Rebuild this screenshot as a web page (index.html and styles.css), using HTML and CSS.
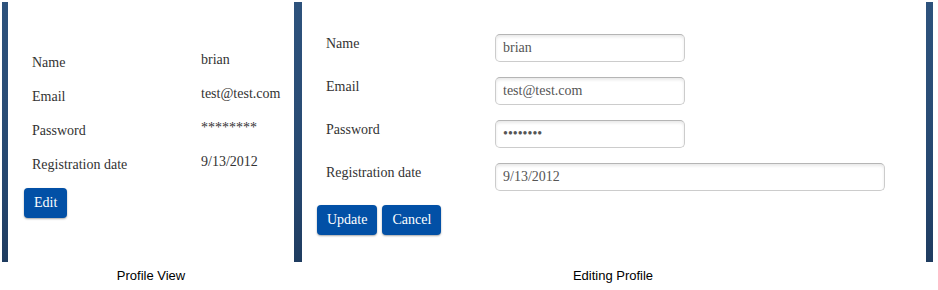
FILE: index.html
```html
<!DOCTYPE html>
<html>
<head>
<meta charset="utf-8">
<link rel="stylesheet" href="styles.css">
</head>
<body>
<div class="shots">
  <figure class="shot shot-view">
    <div class="panel panel-view">
      <div class="grid view-grid">
        <div class="label">Name</div><div class="value">brian</div>
        <div class="label">Email</div><div class="value">test@test.com</div>
        <div class="label">Password</div><div class="value">********</div>
        <div class="label">Registration date</div><div class="value">9/13/2012</div>
      </div>
      <div class="actions view-actions">
        <button class="btn">Edit</button>
      </div>
    </div>
    <figcaption class="caption">Profile View</figcaption>
  </figure>
  <figure class="shot shot-edit">
    <div class="panel panel-edit">
      <div class="grid edit-grid">
        <div class="label">Name</div><div><input class="field" type="text" value="brian"></div>
        <div class="label">Email</div><div><input class="field" type="text" value="test@test.com"></div>
        <div class="label">Password</div><div><input class="field" type="password" value="********"></div>
        <div class="label">Registration date</div><div><input class="field field-wide" type="text" value="9/13/2012"></div>
      </div>
      <div class="actions edit-actions">
        <button class="btn">Update</button>
        <button class="btn">Cancel</button>
      </div>
    </div>
    <figcaption class="caption caption-edit">Editing Profile</figcaption>
  </figure>
</div>
</body>
</html>
```

FILE: styles.css
```css
html, body {
  margin: 0;
  padding: 0;
  background: #ffffff;
}
body {
  padding: 2px 0 0 2px;
  font-family: "Liberation Serif", "Times New Roman", serif;
}
.shots {
  display: flex;
  align-items: flex-start;
}
.shot {
  margin: 0;
  display: flex;
  flex-direction: column;
}
.shot-view { width: 298px; }
.shot-edit { width: 633px; }

.panel {
  box-sizing: border-box;
  height: 260px;
  background: #fff;
  border-style: solid;
  border-width: 0;
  border-image: linear-gradient(180deg, #2d527c 0%, #2a4d76 40%, #24456d 75%, #1f3c60 100%) 1;
}
.panel-view {
  border-left-width: 6px;
  border-right-width: 6px;
  padding: 48px 0 0 16px;
}
.panel-edit {
  border-left-width: 2px;
  border-right-width: 7px;
  padding: 32px 0 0 15px;
}

.grid {
  display: grid;
  font-size: 14px;
  line-height: 20px;
  color: #333;
}
.view-grid {
  grid-template-columns: 177px auto;
  grid-auto-rows: 34px;
}
.view-grid .label {
  padding: 3px 0 0 8px;
}
.edit-grid {
  grid-template-columns: 178px auto;
  grid-auto-rows: 28px;
  row-gap: 15px;
}
.edit-grid .label {
  padding-left: 9px;
}

.field {
  box-sizing: border-box;
  width: 190px;
  height: 28px;
  margin: 0;
  padding: 0 7px;
  border: 1px solid #cccccc;
  border-top-color: #b5b5b5;
  border-radius: 5px;
  box-shadow: inset 0 2px 3px rgba(0, 0, 0, 0.09);
  font-family: "Liberation Serif", "Times New Roman", serif;
  font-size: 14px;
  color: #555;
  background: #fff;
  outline: none;
}
.field-wide { width: 390px; }

.actions {
  display: flex;
  gap: 5px;
}
.view-actions { margin-top: 2px; }
.edit-actions { margin-top: 14px; }

.btn {
  box-sizing: border-box;
  height: 30px;
  padding: 0 10px;
  border: 0;
  border-radius: 4px;
  background: #0250a6;
  color: #fff;
  font-family: "Liberation Serif", "Times New Roman", serif;
  font-size: 14px;
  box-shadow: 0 1px 2px rgba(0, 0, 0, 0.35);
}

.caption {
  height: 28px;
  line-height: 28px;
  text-align: center;
  font-family: "Liberation Sans", Arial, sans-serif;
  font-size: 13px;
  color: #000;
}
.caption-edit {
  padding-right: 7px;
}
```
